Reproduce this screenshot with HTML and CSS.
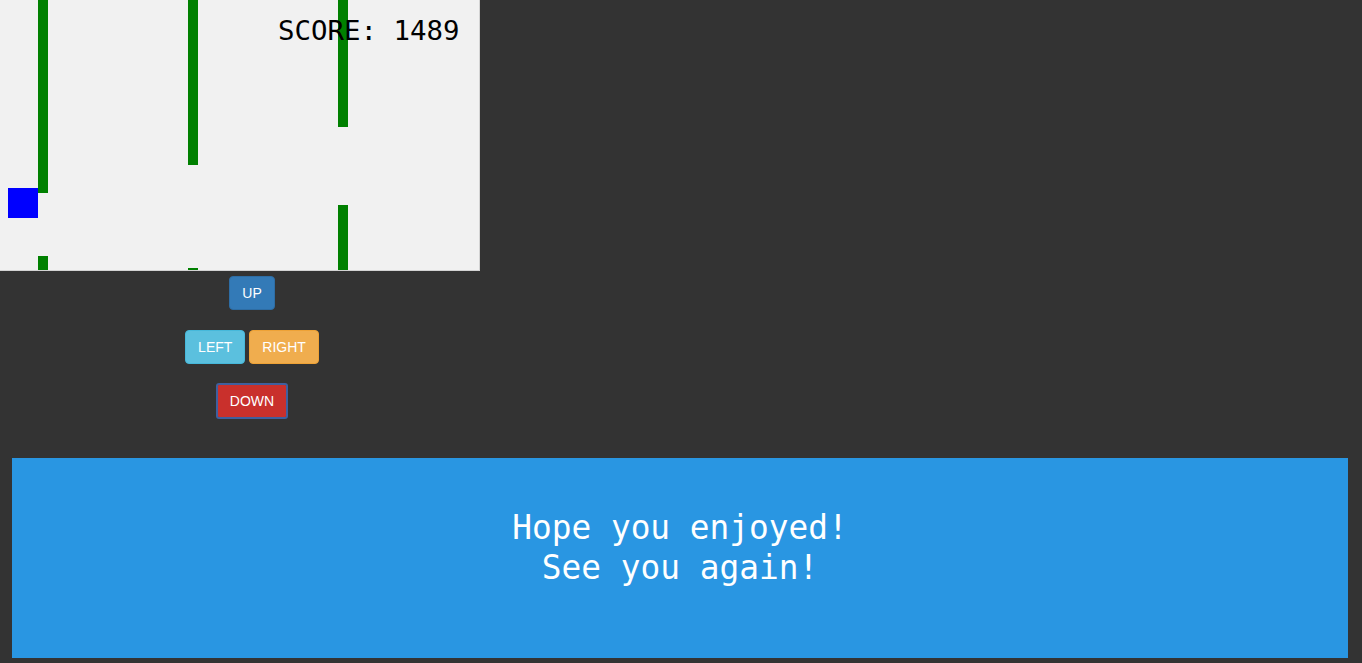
FILE: index.html
```html
<!DOCTYPE html>
<html>
<head>
<meta charset="utf-8">
<title>Game</title>
<link rel="stylesheet" href="styles.css">
</head>
<body>
<div class="game">
  <div class="pipe" style="left:38px;top:0;height:193px"></div>
  <div class="pipe" style="left:38px;top:256px;height:14px"></div>
  <div class="pipe" style="left:188px;top:0;height:165px"></div>
  <div class="pipe" style="left:188px;top:268px;height:2px"></div>
  <div class="pipe" style="left:338px;top:0;height:127px"></div>
  <div class="pipe" style="left:338px;top:205px;height:65px"></div>
  <div class="player" style="left:8px;top:188px"></div>
  <div class="score">SCORE: 1489</div>
</div>
<div class="controls">
  <div class="row"><button class="btn btn-up">UP</button></div>
  <div class="row"><button class="btn btn-left">LEFT</button><button class="btn btn-right">RIGHT</button></div>
  <div class="row"><button class="btn btn-down">DOWN</button></div>
</div>
<div class="bye">
  <p class="bye-text">Hope you enjoyed!<br>See you again!</p>
</div>
</body>
</html>
```
FILE: styles.css
```css
html, body {
  margin: 0;
  padding: 0;
  background: #333333;
  height: 100%;
  overflow: hidden;
}
.game {
  position: relative;
  width: 479px;
  height: 270px;
  background: #f1f1f1;
  border-right: 1px solid #d3d3d3;
  border-bottom: 1px solid #d3d3d3;
  overflow: hidden;
}
.pipe {
  position: absolute;
  width: 10px;
  background: #008000;
}
.player {
  position: absolute;
  width: 30px;
  height: 30px;
  background: #0000ff;
}
.score {
  position: absolute;
  left: 278px;
  top: 14px;
  font-family: "DejaVu Sans Mono", "Liberation Mono", monospace;
  font-size: 27.4px;
  line-height: 34px;
  color: #000;
  white-space: nowrap;
}
.controls {
  width: 504px;
  display: flex;
  flex-direction: column;
  align-items: center;
  gap: 20px;
  padding-top: 5px;
}
.row {
  display: flex;
  gap: 4px;
  justify-content: center;
}
.btn {
  font-family: "Liberation Sans", Arial, sans-serif;
  font-size: 14px;
  line-height: 20px;
  padding: 6px 12px;
  border: 1px solid transparent;
  border-radius: 4px;
  color: #fff;
  cursor: pointer;
  margin: 0;
}
.btn-up {
  background: #337ab7;
  border-color: #2e6da4;
}
.btn-left {
  background: #5bc0de;
  border-color: #46b8da;
}
.btn-right {
  background: #f0ad4e;
  border-color: #eea236;
}
.btn-down {
  background: #c9302c;
  border-color: #ac2925;
  border-radius: 2px;
  outline: 2px solid #3f5f9e;
  outline-offset: -1px;
}
.bye {
  margin: 40px 14px 0 12px;
  height: 200px;
  background: #2996e2;
  box-sizing: border-box;
  padding-top: 50px;
}
.bye-text {
  margin: 0;
  text-align: center;
  color: #ffffff;
  font-family: "DejaVu Sans Mono", "Liberation Mono", monospace;
  font-size: 32.8px;
  line-height: 40px;
}
```
